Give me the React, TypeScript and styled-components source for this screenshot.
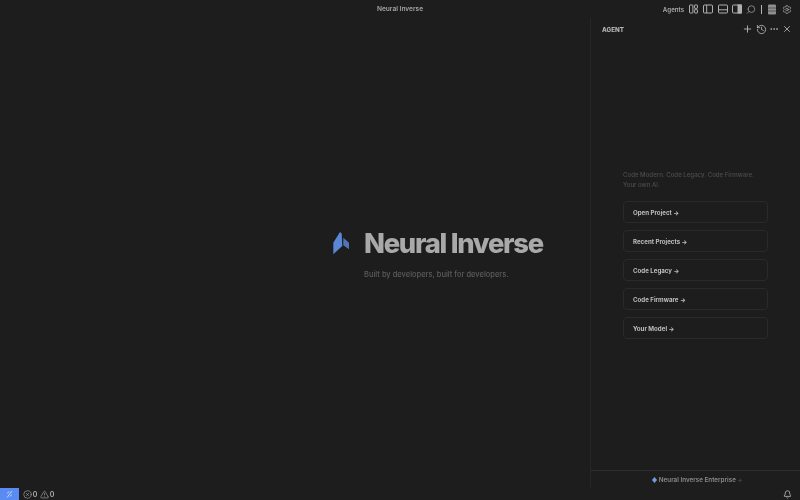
import React from "react";
import styled, { createGlobalStyle } from "styled-components";
import { Plus, History, Ellipsis, X, Search, Settings, Bell, CircleX, TriangleAlert } from "lucide-react";

const Global = createGlobalStyle`
  html, body { margin: 0; padding: 0; background: #1d1d1d; }
  body { font-family: Inter, "Liberation Sans", sans-serif; }
  #root { width: 800px; height: 500px; overflow: hidden; }
`;
const Page = styled.div`
  width: 800px; height: 500px; display: flex; flex-direction: column; color: #bbb; will-change: opacity;
`;
const TitleBar = styled.header`
  height: 18px; flex: none; display: flex; align-items: center; position: relative; justify-content: flex-end; padding-right: 8px; gap: 4.3px;
`;
const Title = styled.div`
  position: absolute; left: 0; right: 0; top: 0; height: 18px; line-height: 19.5px; text-align: center; font-size: 6.6px; color: #a3a3a3; font-weight: 600;
`;
const AgentsLabel = styled.span`
  font-size: 6.2px; font-weight: 600; color: #a8a8a8; margin-right: 0.5px;
`;
const TopIcon = styled.span`
  width: 10px; height: 11px; display: flex; align-items: center; justify-content: center; color: #b0b0b0;
`;
const GearIcon = styled(TopIcon)`
  margin-left: 1px;
`;
const Sep = styled.span`
  width: 1px; height: 9px; background: #b5b5b5; margin-left: 1px;
`;
const Main = styled.main`
  flex: 1; display: flex; min-height: 0;
`;
const Editor = styled.section`
  width: 590px; flex: none; display: flex; flex-direction: column; padding: 208px 0 0 333px; box-sizing: border-box;
`;
const BrandRow = styled.div`
  display: flex; align-items: center; gap: 14px; height: 34px;
`;
const BrandName = styled.h1`
  margin: 0; font-size: 27.4px; line-height: 34px; font-weight: 800; letter-spacing: -1.28px; color: #a9a9a9; white-space: nowrap;
`;
const Tagline = styled.p`
  margin: 9px 0 0 31px; font-size: 7.5px; line-height: 11px; color: #5c5c5c; font-weight: 500; white-space: nowrap;
`;
const Panel = styled.aside`
  flex: 1; display: flex; flex-direction: column; border-left: 1px solid #262626;
`;
const PanelHead = styled.div`
  height: 22px; flex: none; display: flex; align-items: center; padding: 0 7.5px 0 11px; gap: 2.5px;
`;
const PanelTitle = styled.span`
  font-size: 6.2px; font-weight: 800; color: #b4b4b4; flex: 1; letter-spacing: .05px; padding-top: 1px;
`;
const HeadIcon = styled.span`
  width: 11px; height: 11px; display: flex; align-items: center; justify-content: center; color: #c4c4c4;
`;
const DotsIcon = styled(HeadIcon)`
  margin-left: -1px;
`;
const PanelBody = styled.div`
  flex: 1; display: flex; flex-direction: column; padding: 130px 32px 0 32px; gap: 7px;
`;
const Intro = styled.p`
  margin: 0 0 4px; font-size: 6.1px; line-height: 10px; color: #4d4d4d; font-weight: 500; white-space: nowrap;
`;
const Action = styled.button`
  height: 22px; box-sizing: border-box; padding: 0 0 0 9px; background: transparent; border: 1px solid #2a2a2a; border-radius: 4px; font: 700 6.15px Inter, "Liberation Sans", sans-serif; color: #bebebe; text-align: left;
`;
const PanelFoot = styled.div`
  height: 18px; flex: none; border-top: 1px solid #2f2f2f; display: flex; align-items: center; justify-content: center; gap: 2px; font-size: 6.3px; color: #8a8a8a; font-weight: 600; padding: 1px 0 0 3px; box-sizing: border-box;
`;
const FootArrow = styled.span`
  color: #4f4f4f; font-size: 5.5px; margin-left: -1px;
`;
const StatusBar = styled.footer`
  height: 12px; flex: none; display: flex; align-items: center; font-size: 7px; font-weight: 600; color: #b0b0b0; padding-right: 8.5px;
`;
const Remote = styled.span`
  width: 19px; height: 12px; background: #5a8bf2; color: #cfdcf8; display: flex; align-items: center; justify-content: center; margin-right: 4px;
`;
const Problem = styled.span`
  display: flex; align-items: center; gap: 0.8px; margin-right: 2.5px;
`;
const Spacer = styled.span`
  flex: 1;
`;

const Logo = () => (
  <svg width="17" height="23" viewBox="0 0 17 23">
    <path d="M7 0 L8.7 1.5 L9.3 14 L0.3 22.3 L0.3 10.7 Z" fill="#5b86d6" />
    <path d="M10.3 5.7 L16 10.7 L16 17.3 L10.3 13.3 Z" fill="#4f74b8" />
  </svg>
);
const SmallMark = () => (
  <svg width="5" height="6" viewBox="0 0 5 6"><path d="M2.5 0 L5 3 L2.5 6 L0 3 Z" fill="#6f9fe0" /></svg>
);
const RemoteIcon = () => (
  <svg width="7" height="8" viewBox="0 0 7 8" fill="none" stroke="currentColor" strokeWidth=".9">
    <path d="M1 7.5 L6 1 M1.2 3.2 L3.3 1.6 M3.8 6.4 L5.8 4.8" />
  </svg>
);
const GridIcon = () => (
  <svg width="8" height="11" viewBox="0 0 8 11" fill="#8f8f8f"><rect x="0" y=".5" width="8" height="10" rx="1" /><path d="M0 4h8M0 7h8" stroke="#333" strokeWidth=".6" /></svg>
);
const LayoutIcon = () => (
  <svg width="9" height="10" viewBox="0 0 9 10" fill="none" stroke="currentColor" strokeWidth="1"><rect x=".5" y="1" width="3.4" height="8" rx=".6" /><rect x="5.4" y="1" width="3.1" height="3.3" rx=".5" /><rect x="5.4" y="5.7" width="3.1" height="3.3" rx=".5" /></svg>
);
const LeftPaneIcon = () => (
  <svg width="10" height="10" viewBox="0 0 10 10" fill="none" stroke="currentColor" strokeWidth="1"><rect x=".5" y="1" width="9" height="8" rx="1" /><path d="M3.7 1v8" /></svg>
);
const BottomPaneIcon = () => (
  <svg width="10" height="10" viewBox="0 0 10 10" fill="none" stroke="currentColor" strokeWidth="1"><rect x=".5" y="1" width="9" height="8" rx="1" /><path d="M.5 5.8h9" /></svg>
);
const RightPaneIcon = () => (
  <svg width="10" height="10" viewBox="0 0 10 10" fill="none" stroke="currentColor" strokeWidth="1"><rect x=".5" y="1" width="9" height="8" rx="1" /><rect x="6" y="1" width="3.5" height="8" fill="currentColor" /></svg>
);

const actions = ["Open Project", "Recent Projects", "Code Legacy", "Code Firmware", "Your Model"];

export default function App() {
  return (
    <Page>
      <Global />
      <TitleBar>
        <Title>Neural Inverse</Title>
        <AgentsLabel>Agents</AgentsLabel>
        <TopIcon><LayoutIcon /></TopIcon>
        <TopIcon><LeftPaneIcon /></TopIcon>
        <TopIcon><BottomPaneIcon /></TopIcon>
        <TopIcon><RightPaneIcon /></TopIcon>
        <TopIcon><Search size={11} strokeWidth={1.6} style={{ transform: "scaleX(-1)" }} /></TopIcon>
        <Sep />
        <TopIcon><GridIcon /></TopIcon>
        <GearIcon><Settings size={11} strokeWidth={1.6} /></GearIcon>
      </TitleBar>
      <Main>
        <Editor>
          <BrandRow>
            <Logo />
            <BrandName>Neural Inverse</BrandName>
          </BrandRow>
          <Tagline>Built by developers, built for developers.</Tagline>
        </Editor>
        <Panel>
          <PanelHead>
            <PanelTitle>AGENT</PanelTitle>
            <HeadIcon><Plus size={12} strokeWidth={1.8} /></HeadIcon>
            <HeadIcon><History size={11} strokeWidth={1.7} /></HeadIcon>
            <DotsIcon><Ellipsis size={10} strokeWidth={1.7} /></DotsIcon>
            <HeadIcon><X size={10} strokeWidth={1.9} /></HeadIcon>
          </PanelHead>
          <PanelBody>
            <Intro>Code Modern. Code Legacy. Code Firmware.<br />Your own AI.</Intro>
            {actions.map((a) => <Action key={a}>{a} →</Action>)}
          </PanelBody>
          <PanelFoot><SmallMark /> Neural Inverse Enterprise <FootArrow>→</FootArrow></PanelFoot>
        </Panel>
      </Main>
      <StatusBar>
        <Remote><RemoteIcon /></Remote>
        <Problem><CircleX size={9} strokeWidth={1.6} />0</Problem>
        <Problem><TriangleAlert size={9} strokeWidth={1.6} />0</Problem>
        <Spacer />
        <Bell size={9} strokeWidth={1.9} color="#d0d0d0" />
      </StatusBar>
    </Page>
  );
}
